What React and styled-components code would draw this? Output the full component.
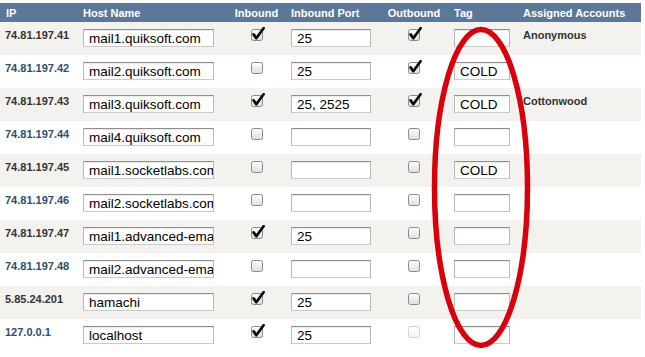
import styled, { createGlobalStyle } from 'styled-components';

const GlobalStyle = createGlobalStyle`
  html, body {
    margin: 0;
    padding: 0;
    background: #ffffff;
  }
  body {
    font-family: 'Liberation Sans', Arial, sans-serif;
  }
`;

const COLS = '80px 145px 63px 95px 62px 74px 122px';

const Page = styled.div`
  position: relative;
  width: 645px;
  height: 357px;
  padding-top: 3px;
  box-sizing: border-box;
  overflow: hidden;
`;

const Table = styled.div`
  width: 641px;
`;

const HeaderRow = styled.div`
  display: grid;
  grid-template-columns: ${COLS};
  height: 19px;
  align-items: center;
  background: #5c7899;
`;

const HeadCell = styled.div`
  color: #ffffff;
  font-weight: bold;
  font-size: 11px;
  line-height: 13px;
  padding-left: ${({ $pad }) => $pad || 0}px;
  padding-top: 1px;
  text-align: ${({ $center }) => ($center ? 'center' : 'left')};
  white-space: nowrap;
`;

const Row = styled.div`
  display: grid;
  grid-template-columns: ${COLS};
  height: 33px;
  align-items: start;
  background: ${({ $shaded }) => ($shaded ? '#f4f2ef' : '#ffffff')};
`;

const Cell = styled.div`
  padding-top: 7px;
  padding-left: ${({ $pad }) => $pad || 0}px;
  display: flex;
  justify-content: ${({ $center }) => ($center ? 'center' : 'flex-start')};
`;

const Label = styled.div`
  font-weight: bold;
  font-size: 11px;
  line-height: 13px;
  color: ${({ $tone }) => ($tone === 'link' ? '#2d4d73' : '#333333')};
  white-space: nowrap;
`;

const Field = styled.input`
  box-sizing: border-box;
  width: ${({ $w }) => $w}px;
  height: 18px;
  margin: 0;
  padding: 1px 0 0 5px;
  border: 1px solid #b8b8b8;
  border-top-color: #8e8e8e;
  border-bottom-color: #cacaca;
  box-shadow: inset 0 1px 1px rgba(0, 0, 0, 0.08);
  background: #ffffff;
  font-family: 'Liberation Sans', Arial, sans-serif;
  font-size: 13.5px;
  line-height: 15px;
  color: #000000;
  outline: none;
`;

const BoxSvg = styled.svg`
  display: block;
  margin-top: -2px;
  margin-left: 2px;
`;

const Ring = styled.svg`
  position: absolute;
  left: 0;
  top: 0;
  pointer-events: none;
`;

function Check({ checked, disabled }) {
  const border = disabled ? '#d2d2d2' : '#8a8a8a';
  return (
    <BoxSvg width="14" height="16" viewBox="0 0 14 16">
      <defs>
        <linearGradient id={disabled ? 'cbd' : 'cb'} x1="0" y1="0" x2="0" y2="1">
          <stop offset="0" stopColor="#ffffff" />
          <stop offset="1" stopColor={disabled ? '#f3f3f3' : '#dedede'} />
        </linearGradient>
      </defs>
      <rect
        x="0.5"
        y="2.5"
        width="11"
        height="11"
        rx="2"
        fill={`url(#${disabled ? 'cbd' : 'cb'})`}
        stroke={border}
      />
      {checked && (
        <path
          d="M2.6 7.4 L5.3 11.2 L12.6 1.2"
          fill="none"
          stroke="#0a0a0a"
          strokeWidth="2.7"
          strokeLinecap="round"
          strokeLinejoin="round"
        />
      )}
    </BoxSvg>
  );
}

const rows = [
  { ip: '74.81.197.41', host: 'mail1.quiksoft.com', inb: true, port: '25', out: true, tag: '', acct: 'Anonymous' },
  { ip: '74.81.197.42', host: 'mail2.quiksoft.com', inb: false, port: '25', out: true, tag: 'COLD', acct: '' },
  { ip: '74.81.197.43', host: 'mail3.quiksoft.com', inb: true, port: '25, 2525', out: true, tag: 'COLD', acct: 'Cottonwood' },
  { ip: '74.81.197.44', host: 'mail4.quiksoft.com', inb: false, port: '', out: false, tag: '', acct: '' },
  { ip: '74.81.197.45', host: 'mail1.socketlabs.com', inb: false, port: '', out: false, tag: 'COLD', acct: '' },
  { ip: '74.81.197.46', host: 'mail2.socketlabs.com', inb: false, port: '', out: false, tag: '', acct: '' },
  { ip: '74.81.197.47', host: 'mail1.advanced-email.com', inb: true, port: '25', out: false, tag: '', acct: '' },
  { ip: '74.81.197.48', host: 'mail2.advanced-email.com', inb: false, port: '', out: false, tag: '', acct: '' },
  { ip: '5.85.24.201', host: 'hamachi', inb: true, port: '25', out: false, tag: '', acct: '' },
  { ip: '127.0.0.1', host: 'localhost', inb: true, port: '25', out: false, outDisabled: true, tag: '', acct: '' },
];

export default function App() {
  return (
    <Page>
      <GlobalStyle />
      <Table>
        <HeaderRow>
          <HeadCell $pad={6}>IP</HeadCell>
          <HeadCell $pad={3}>Host Name</HeadCell>
          <HeadCell $center>Inbound</HeadCell>
          <HeadCell $pad={3}>Inbound Port</HeadCell>
          <HeadCell $center>Outbound</HeadCell>
          <HeadCell $pad={9}>Tag</HeadCell>
          <HeadCell $pad={4}>Assigned Accounts</HeadCell>
        </HeaderRow>
        {rows.map((r, i) => (
          <Row key={r.ip} $shaded={i % 2 === 0}>
            <Cell $pad={5}>
              <Label $tone={i % 2 === 0 ? 'plain' : 'link'}>{r.ip}</Label>
            </Cell>
            <Cell $pad={3}>
              <Field $w={131} defaultValue={r.host} />
            </Cell>
            <Cell $center>
              <Check checked={r.inb} />
            </Cell>
            <Cell $pad={3}>
              <Field $w={80} defaultValue={r.port} />
            </Cell>
            <Cell $center>
              <Check checked={r.out} disabled={r.outDisabled} />
            </Cell>
            <Cell $pad={9}>
              <Field $w={56} defaultValue={r.tag} />
            </Cell>
            <Cell $pad={4}>
              <Label $tone="plain">{r.acct}</Label>
            </Cell>
          </Row>
        ))}
      </Table>
      <Ring width="645" height="357" viewBox="0 0 645 357">
        <ellipse cx="481" cy="187.5" rx="46.5" ry="158" fill="none" stroke="#d9000c" strokeWidth="5.5" />
      </Ring>
    </Page>
  );
}
